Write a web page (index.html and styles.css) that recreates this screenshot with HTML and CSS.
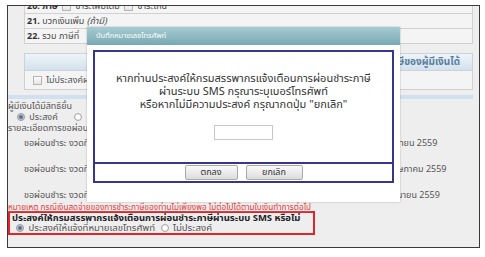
FILE: index.html
```html
<!DOCTYPE html>
<html lang="th">
<head>
<meta charset="utf-8">
<title>บันทึกหมายเลขโทรศัพท์</title>
<link rel="stylesheet" href="styles.css">
</head>
<body>
<div class="frame">
  <div class="rows">
    <div class="row"><b>20. ภาษี</b> <span class="cb"></span> ชำระเพิ่มเติม <span class="cb"></span> ชำระเกิน</div>
    <div class="row"><b>21.</b> บวกเงินเพิ่ม <i>(ถ้ามี)</i></div>
    <div class="row"><b>22.</b> รวม ภาษีที่</div>
  </div>
  <div class="section">
    <div class="sec-head">ขอผ่อนชำระภาษีของผู้มีเงินได้</div>
    <div class="sec-row"><span class="cb"></span> ไม่ประสงค์ผ่อน</div>
  </div>
  <div class="band"></div>
  <div class="plain first">ผู้มีเงินได้มีสิทธิยื่น</div>
  <div class="plain radios"><span class="radio on"></span> ประสงค์ <span class="radio gap"></span></div>
  <div class="plain">รายละเอียดการขอผ่อน</div>
  <div class="inst">
    <div class="inst-row"><span class="lbl">ขอผ่อนชำระ งวดที่ 1</span><span class="month">เมษายน 2559</span></div>
    <div class="inst-row"><span class="lbl">ขอผ่อนชำระ งวดที่ 2</span><span class="month">พฤษภาคม 2559</span></div>
    <div class="inst-row"><span class="lbl">ขอผ่อนชำระ งวดที่ 3</span><span class="month">มิถุนายน 2559</span></div>
  </div>
  <div class="note">หมายเหตุ กรณีเงินสดจ่ายของการชำระภาษีของท่านไม่เพียงพอ ไม่ต่อไปได้ตามใบเงินทำการต่อไป</div>
  <div class="sms">
    <div class="sms-q">ประสงค์ให้กรมสรรพากรแจ้งเตือนการผ่อนชำระภาษีผ่านระบบ SMS หรือไม่</div>
    <div class="sms-a"><span class="radio on"></span> ประสงค์ให้แจ้งที่หมายเลขโทรศัพท์ <span class="radio gap"></span> ไม่ประสงค์</div>
  </div>
</div>

<div class="dialog">
  <div class="dlg-title">บันทึกหมายเลขโทรศัพท์</div>
  <div class="dlg-body">
    <div class="dlg-box">
      <div class="dlg-msg">
        <p>หากท่านประสงค์ให้กรมสรรพากรแจ้งเตือนการผ่อนชำระภาษี</p>
        <p>ผ่านระบบ SMS กรุณาระบุเบอร์โทรศัพท์</p>
        <p>หรือหากไม่มีความประสงค์ กรุณากดปุ่ม "ยกเลิก"</p>
        <input class="phone" type="text">
      </div>
      <div class="dlg-btns">
        <button class="btn ok">ตกลง</button>
        <button class="btn cancel">ยกเลิก</button>
      </div>
    </div>
  </div>
</div>
</body>
</html>
```
FILE: styles.css
```css
* { box-sizing: border-box; }
html, body { margin: 0; padding: 0; background: #fff; }
body {
  width: 485px; height: 257px; overflow: hidden; position: relative;
  font-family: Tahoma, "Noto Sans Thai", Loma, Garuda, "DejaVu Sans", sans-serif;
  font-size: 9px; color: #555;
}
.frame {
  margin: 5px 0 0 7px; width: 473px; height: 243px;
  border: 1px solid #3a3a3a; background: #eeeeee; overflow: hidden;
}
.rows { margin: -7px 6px 0 16px; }
.row {
  height: 15px; line-height: 14px; border: 1px solid #d0d0d0; border-top: none;
  background: #f4f4f4; padding-left: 2px; white-space: nowrap; color: #4a4a4a;
}
.row b { color: #333; }
.cb {
  display: inline-block; width: 9px; height: 9px; border: 1px solid #b5b5b5;
  background: linear-gradient(#fdfdfd, #e4e4e4); vertical-align: -2px; margin: 0 2px;
}
.section { margin: 9px 6px 0 16px; }
.sec-head {
  height: 18px; line-height: 17px; border: 1px solid #c9d3dc;
  background: linear-gradient(#eef4f9, #d3e1ec); text-align: right;
  padding-right: 12px; color: #5a7f9e; white-space: nowrap; overflow: hidden;
  font-size: 10px; font-weight: bold;
}
.sec-row {
  height: 19px; line-height: 18px; border: 1px solid #d0d0d0; border-top: none;
  background: #f4f4f4; padding-left: 6px; white-space: nowrap;
}
.band { margin: 5px 6px 0 0; height: 4px; background: #cfe0ef; }
.plain { height: 11px; line-height: 11px; white-space: nowrap; }
.plain.first { margin-top: 2px; }
.radios { padding-left: 9px; }
.radio {
  display: inline-block; width: 8px; height: 8px; border-radius: 50%;
  border: 1px solid #a8a8a8; background: radial-gradient(circle, #fff 40%, #dcdcdc 100%);
  vertical-align: -1px; margin-right: 2px;
}
.radio.on { background: radial-gradient(circle, #5b6f86 30%, #c4cdd6 62%, #e6e6e6 100%); border-color: #8c9aa8; }
.radios .gap { margin-left: 14px; }
.inst { padding-left: 16px; }
.inst-row { height: 26px; padding-top: 4px; display: flex; white-space: nowrap; line-height: 11px; }
.inst-row:last-child { height: 18px; }
.lbl { width: 362px; }
.note {
  height: 7px; line-height: 7px; color: #e23a3a; white-space: nowrap; font-size: 8.2px;
  text-decoration: underline;
}
.sms {
  width: 307px; height: 24px; border: 2px solid #e3242b; padding-left: 2px;
  white-space: nowrap;
}
.sms-q { font-weight: bold; color: #222; font-size: 9.5px; line-height: 10px; }
.sms-a { padding-left: 4px; color: #555; line-height: 10px; font-size: 9.6px; }
.sms-a .gap { margin-left: 3px; }

.dialog {
  position: absolute; left: 87px; top: 27px; width: 313px; height: 175px;
  background: #fff; box-shadow: 0 0 2px rgba(0,0,0,0.25);
  display: flex; flex-direction: column;
}
.dlg-title {
  height: 18px; line-height: 18px; padding-left: 9px; color: #fff; font-size: 7.5px;
  background: linear-gradient(#a6cbd2, #78a9b3);
}
.dlg-body { flex: 1; padding: 5px 6px 19px; }
.dlg-box {
  height: 133px; border: 2px solid #36368a; display: flex; flex-direction: column;
}
.dlg-msg {
  height: 112px; border-bottom: 2px solid #36368a; padding-top: 20px;
  display: flex; flex-direction: column; align-items: center; color: #333;
}
.dlg-msg p { margin: 0; line-height: 13px; font-size: 11px; white-space: nowrap; }
.phone {
  margin-top: 14px; width: 59px; height: 15px; border: 1px solid #c8c8c8;
  background: #fff; padding: 0; font: inherit;
}
.dlg-btns { flex: 1; display: flex; justify-content: center; align-items: center; gap: 8px; }
.btn {
  height: 15px; padding: 0; font: inherit; font-size: 9px; line-height: 13px; color: #333;
  border: 1px solid #a9a9a9; border-radius: 2px; background: linear-gradient(#fafafa, #dcdcdc);
}
.ok { width: 53px; }
.cancel { width: 57px; }
```
